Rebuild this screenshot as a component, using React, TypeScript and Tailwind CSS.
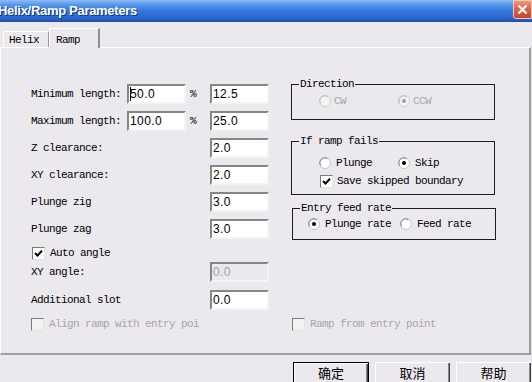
import React from "react";

function Field({ value, disabled, caret }: { value: string; disabled?: boolean; caret?: boolean }) {
  return (
    <div
      className={`w-[59px] h-[20px] shrink-0 border-2 border-t-[#868686] border-l-[#868686] border-b-[#f3f3f3] border-r-[#f3f3f3] flex items-center pl-[1px] font-['Liberation_Sans',Arial,sans-serif] text-[12px] tracking-[0.4px] leading-none ${
        disabled ? "bg-[#ebe9ed] text-[#a3a3a3]" : "bg-white text-black"
      }`}
    >
      {caret && <span className="w-[1px] h-[14px] bg-black mr-[-1px]" />}
      {value}
    </div>
  );
}

function Check({ checked, disabled }: { checked?: boolean; disabled?: boolean }) {
  return (
    <span
      className={`w-[13px] h-[13px] shrink-0 border border-t-[#7b7b7b] border-l-[#7b7b7b] border-b-[#e2e2e2] border-r-[#e2e2e2] flex items-center justify-center ${
        disabled ? "bg-[#f2f2f2]" : "bg-white"
      }`}
    >
      {checked && (
        <svg width="9" height="9" viewBox="0 0 9 9">
          <path d="M1 4 L3.5 6.5 L8 1.8" stroke="#000" strokeWidth="2" fill="none" />
        </svg>
      )}
    </span>
  );
}

function Radio({ checked, disabled }: { checked?: boolean; disabled?: boolean }) {
  return (
    <svg width="12" height="12" viewBox="0 0 12 12" className="shrink-0">
      <circle cx="6" cy="6" r="5.5" fill={disabled ? "#f3f3f3" : "#ffffff"} stroke={disabled ? "#d0d0d0" : "#c4c4c4"} />
      <path d="M1.6 8.5 A5 5 0 0 1 8.5 1.6" stroke={disabled ? "#b8b8b8" : "#808080"} strokeWidth="1" fill="none" />
      {checked && <circle cx="6" cy="6" r="2" fill={disabled ? "#a0a0a0" : "#000"} />}
    </svg>
  );
}

function Row({ label, children }: { label: string; children: React.ReactNode }) {
  return (
    <div className="flex items-center h-[20px]">
      {children}
      <span className="hidden">{label}</span>
    </div>
  );
}

export default function App() {
  const mono = "font-['Liberation_Mono','DejaVu_Sans_Mono',monospace] text-[11px] tracking-[-0.6px]";
  return (
    <div className={`w-[532px] h-[382px] bg-[#ebe9ed] overflow-hidden flex flex-col text-black ${mono}`}>
      {/* Title bar */}
      <div className="h-[22px] shrink-0 flex items-start justify-between bg-[linear-gradient(180deg,#8fbcf5_0%,#5596ea_22%,#3577dc_50%,#2b67cf_80%,#1f52b0_100%)]">
        <span className="ml-[-2px] mt-[3px] font-['Liberation_Sans',Arial,sans-serif] font-bold text-[13px] tracking-[-0.3px] leading-[15px] text-white [text-shadow:1px_1px_0_#14347a]">
          Helix/Ramp Parameters
        </span>
        <span className="w-[19px] h-[19px] mt-[0px] rounded-bl-[3px] border border-[#f3c9bc] bg-[linear-gradient(180deg,#ee9a7c_0%,#dd6546_45%,#c8462a_100%)] flex items-center justify-center">
          <svg width="11" height="11" viewBox="0 0 11 11">
            <path d="M1.5 1.5 L9.5 9.5 M9.5 1.5 L1.5 9.5" stroke="#fff" strokeWidth="2.2" />
          </svg>
        </span>
      </div>

      {/* Tabs */}
      <div className="h-[25px] shrink-0 flex items-end pl-[3px]">
        <div className="w-[46px] h-[16px] border-t border-l border-t-white border-l-white border-r border-r-[#9a9a9a] flex items-center pl-[5px] pt-[1px]">
          Helix
        </div>
        <div className="relative z-10 w-[51px] h-[20px] mb-[-1px] bg-[#ebe9ed] border-t border-l border-t-white border-l-white border-r-2 border-r-[#8e8e8e] flex items-start pl-[6px] pt-[3px]">
          Ramp
        </div>
      </div>

      {/* Panel */}
      <div className="w-[531px] h-[308px] shrink-0 border-t border-l border-t-white border-l-white border-r-2 border-b-2 border-r-[#9c9c9c] border-b-[#a0a0a0] flex flex-col">
        <div className="flex pl-[30px]">
          {/* Left column */}
          <div className="flex flex-col pt-[36px] w-[238px]">
            <Row label="">
              <span className="w-[96px]">Minimum length:</span>
              <Field value="50.0" caret />
              <span className="w-[24px] pl-[4px]">%</span>
              <Field value="12.5" />
            </Row>
            <div className="mt-[7px]">
              <Row label="">
                <span className="w-[96px]">Maximum length:</span>
                <Field value="100.0" />
                <span className="w-[24px] pl-[4px]">%</span>
                <Field value="25.0" />
              </Row>
            </div>
            <div className="mt-[7px]">
              <Row label="">
                <span className="w-[179px]">Z clearance:</span>
                <Field value="2.0" />
              </Row>
            </div>
            <div className="mt-[7px]">
              <Row label="">
                <span className="w-[179px]">XY clearance:</span>
                <Field value="2.0" />
              </Row>
            </div>
            <div className="mt-[7px]">
              <Row label="">
                <span className="w-[179px]">Plunge zig</span>
                <Field value="3.0" />
              </Row>
            </div>
            <div className="mt-[7px]">
              <Row label="">
                <span className="w-[179px]">Plunge zag</span>
                <Field value="3.0" />
              </Row>
            </div>
            <div className="mt-[8px] h-[13px] flex items-center pl-[1px]">
              <Check checked />
              <span className="ml-[5px]">Auto angle</span>
            </div>
            <div className="mt-[2px]">
              <Row label="">
                <span className="w-[179px]">XY angle:</span>
                <Field value="0.0" disabled />
              </Row>
            </div>
            <div className="mt-[8px]">
              <Row label="">
                <span className="w-[179px]">Additional slot</span>
                <Field value="0.0" />
              </Row>
            </div>
          </div>

          {/* Right column */}
          <div className="flex flex-col pt-[36px] ml-[22px]">
            <div className="w-[204px] h-[36px] border border-[#1c1c1c] flex flex-col">
              <span className="mt-[-7px] ml-[7px] px-[1px] self-start h-[12px] leading-[12px] bg-[#ebe9ed]">Direction</span>
              <div className="mt-[5px] h-[12px] flex items-center pl-[27px] text-[#a8a8a8]">
                <div className="w-[79px] flex items-center">
                  <Radio disabled />
                  <span className="ml-[3px]">CW</span>
                </div>
                <div className="flex items-center">
                  <Radio checked disabled />
                  <span className="ml-[3px]">CCW</span>
                </div>
              </div>
            </div>

            <div className="mt-[21px] w-[204px] h-[54px] border border-[#1c1c1c] flex flex-col">
              <span className="mt-[-7px] ml-[7px] px-[1px] self-start h-[12px] leading-[12px] bg-[#ebe9ed]">If ramp fails</span>
              <div className="mt-[10px] h-[12px] flex items-center pl-[27px]">
                <div className="w-[79px] flex items-center">
                  <Radio />
                  <span className="ml-[5px]">Plunge</span>
                </div>
                <div className="flex items-center">
                  <Radio checked />
                  <span className="ml-[5px]">Skip</span>
                </div>
              </div>
              <div className="mt-[6px] h-[13px] flex items-center pl-[28px]">
                <Check checked />
                <span className="ml-[4px]">Save skipped boundary</span>
              </div>
            </div>

            <div className="mt-[13px] ml-[1px] w-[204px] h-[32px] border border-[#1c1c1c] flex flex-col">
              <span className="mt-[-7px] ml-[7px] px-[1px] self-start h-[12px] leading-[12px] bg-[#ebe9ed]">Entry feed rate</span>
              <div className="mt-[4px] h-[12px] flex items-center pl-[15px]">
                <div className="w-[92px] flex items-center">
                  <Radio checked />
                  <span className="ml-[5px]">Plunge rate</span>
                </div>
                <div className="flex items-center">
                  <Radio />
                  <span className="ml-[5px]">Feed rate</span>
                </div>
              </div>
            </div>
          </div>
        </div>

        {/* Bottom checkbox row */}
        <div className="mt-[8px] h-[13px] flex items-center pl-[30px] text-[#a6a6a6]">
          <div className="w-[261px] flex items-center">
            <Check disabled />
            <span className="ml-[5px]">Align ramp with entry poi</span>
          </div>
          <div className="flex items-center">
            <Check disabled />
            <span className="ml-[5px]">Ramp from entry point</span>
          </div>
        </div>
      </div>

      {/* Buttons */}
      <div className="flex justify-end gap-[6px] pr-[1px] pt-[7px] font-['Noto_Sans_CJK_SC','Noto_Sans',sans-serif] text-[13px] tracking-normal">
        <div className="w-[76px] h-[23px] border border-black shadow-[inset_1px_1px_0_#ffffff,inset_-1px_-1px_0_#404040,inset_-2px_-2px_0_#8a8a8a] flex items-center justify-center pb-[3px] leading-none">
          确定
        </div>
        <div className="w-[75px] h-[23px] shadow-[inset_1px_1px_0_#ffffff,inset_-1px_-1px_0_#404040,inset_-2px_-2px_0_#8a8a8a] flex items-center justify-center pb-[3px] leading-none">
          取消
        </div>
        <div className="w-[75px] h-[23px] shadow-[inset_1px_1px_0_#ffffff,inset_-1px_-1px_0_#404040,inset_-2px_-2px_0_#8a8a8a] flex items-center justify-center pb-[3px] leading-none">
          帮助
        </div>
      </div>
    </div>
  );
}
